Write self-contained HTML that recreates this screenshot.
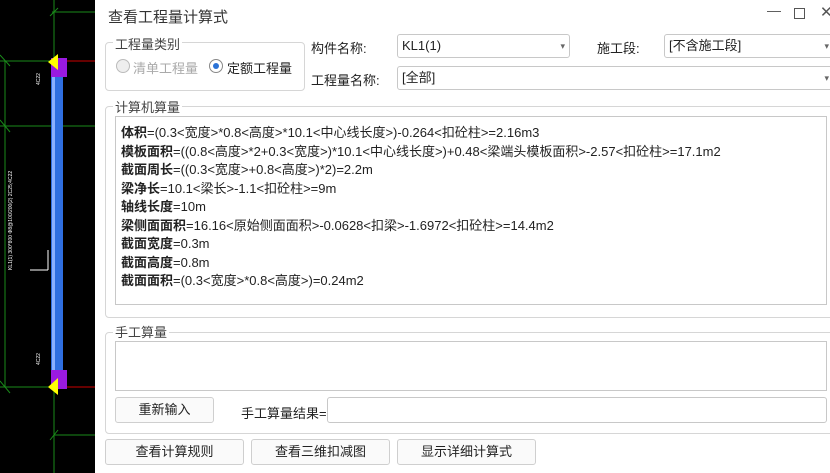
<!DOCTYPE html><html><head><meta charset="utf-8"><style>
body{margin:0;width:830px;height:473px;overflow:hidden;background:#fff;font-family:"Liberation Sans","Microsoft YaHei","Noto Sans CJK SC",sans-serif;font-size:13px;color:#222;position:relative}
.a{position:absolute}
.grp{position:absolute;border:1px solid #d6d6d6;border-radius:4px}
.lg{position:absolute;background:#fff;padding:0 2px;color:#444;font-size:13px}
.sel{position:absolute;border:1px solid #c8c8c8;border-radius:3px;background:#fff;box-sizing:border-box;padding:0 4px;line-height:22px;font-size:13px}
.sel:after{content:"▾";position:absolute;right:4px;top:0;font-size:9px;color:#666}
.btn{position:absolute;border:1px solid #cfcfcf;border-radius:3px;background:#fafafa;box-sizing:border-box;text-align:center;line-height:24px;font-size:13px}
.ta{position:absolute;border:1px solid #c8c8c8;box-sizing:border-box;background:#fff}
.ln{position:absolute;left:5px;font-size:13px;white-space:nowrap}
.ln b{font-weight:bold}
</style></head><body>
<div class="a" style="left:0;top:0;width:95px;height:473px;background:#000;overflow:hidden">
<svg width="95" height="473">
<g stroke="#1a8a1a" stroke-width="1" fill="none">
<line x1="54" y1="0" x2="54" y2="60"/><line x1="5" y1="61" x2="5" y2="387"/>
<line x1="52" y1="12" x2="95" y2="12"/><line x1="0" y1="61" x2="95" y2="61"/>
<line x1="0" y1="126" x2="95" y2="126"/><line x1="0" y1="387" x2="95" y2="387"/>
<line x1="54" y1="387" x2="54" y2="473"/><line x1="54" y1="435" x2="95" y2="435"/>
<line x1="0" y1="55" x2="10" y2="66"/><line x1="0" y1="120" x2="10" y2="132"/><line x1="0" y1="381" x2="10" y2="393"/><line x1="50" y1="16" x2="58" y2="8"/><line x1="50" y1="440" x2="58" y2="430"/>
</g>
<line x1="60" y1="61" x2="95" y2="61" stroke="#c00"/><line x1="60" y1="387" x2="95" y2="387" stroke="#c00"/>
<rect x="51" y="70" width="12" height="305" fill="#2f6fe0"/><rect x="52" y="70" width="3" height="305" fill="#8ab0ff"/>
<rect x="51" y="58" width="16" height="19" fill="#9a1ae0"/><rect x="51" y="370" width="16" height="19" fill="#9a1ae0"/>
<polygon points="48,62 58,54 58,70" fill="#ff0"/><polygon points="48,387 58,378 58,395" fill="#ff0"/>
<line x1="30" y1="270" x2="48" y2="270" stroke="#fff"/><line x1="48" y1="250" x2="48" y2="270" stroke="#fff"/>
<text x="0" y="0" fill="#fff" font-size="5" transform="translate(12,270) rotate(-90)">KL1(1) 300*800 Φ8@100/200(2) 2C25;4C22</text>
<text x="0" y="0" fill="#fff" font-size="5" transform="translate(40,85) rotate(-90)">4C22</text>
<text x="0" y="0" fill="#fff" font-size="5" transform="translate(40,365) rotate(-90)">4C22</text>
</svg></div>
<div class="a" style="left:108px;top:6px;font-size:15px;color:#333">查看工程量计算式</div>
<div class="a" style="left:767px;top:2px;font-size:14px;color:#555">—</div>
<div class="a" style="left:794px;top:8px;width:9px;height:9px;border:1px solid #555"></div>
<div class="a" style="left:820px;top:3px;font-size:15px;color:#555">✕</div>
<div class="grp" style="left:105px;top:42px;width:198px;height:47px"></div>
<div class="lg" style="left:113px;top:34px">工程量类别</div>
<div class="a" style="left:116px;top:59px;width:12px;height:12px;border:1px solid #bbb;border-radius:50%;background:#eee"></div>
<div class="a" style="left:133px;top:58px;color:#aaa">清单工程量</div>
<div class="a" style="left:209px;top:59px;width:12px;height:12px;border:1px solid #888;border-radius:50%"></div>
<div class="a" style="left:213px;top:63px;width:6px;height:6px;border-radius:50%;background:#2a72d6"></div>
<div class="a" style="left:227px;top:58px">定额工程量</div>
<div class="a" style="left:311px;top:38px">构件名称:</div>
<div class="sel" style="left:397px;top:34px;width:173px;height:24px">KL1(1)</div>
<div class="a" style="left:597px;top:38px">施工段:</div>
<div class="sel" style="left:664px;top:34px;width:170px;height:24px">[不含施工段]</div>
<div class="a" style="left:311px;top:70px">工程量名称:</div>
<div class="sel" style="left:397px;top:66px;width:437px;height:24px">[全部]</div>
<div class="grp" style="left:105px;top:106px;width:730px;height:210px"></div>
<div class="lg" style="left:113px;top:97px">计算机算量</div>
<div class="ta" style="left:115px;top:116px;width:712px;height:189px">
<div class="ln" style="top:5px"><b>体积</b>=(0.3&lt;宽度&gt;*0.8&lt;高度&gt;*10.1&lt;中心线长度&gt;)-0.264&lt;扣砼柱&gt;=2.16m3</div>
<div class="ln" style="top:23.5px"><b>模板面积</b>=((0.8&lt;高度&gt;*2+0.3&lt;宽度&gt;)*10.1&lt;中心线长度&gt;)+0.48&lt;梁端头模板面积&gt;-2.57&lt;扣砼柱&gt;=17.1m2</div>
<div class="ln" style="top:42px"><b>截面周长</b>=((0.3&lt;宽度&gt;+0.8&lt;高度&gt;)*2)=2.2m</div>
<div class="ln" style="top:60.5px"><b>梁净长</b>=10.1&lt;梁长&gt;-1.1&lt;扣砼柱&gt;=9m</div>
<div class="ln" style="top:79px"><b>轴线长度</b>=10m</div>
<div class="ln" style="top:97.5px"><b>梁侧面面积</b>=16.16&lt;原始侧面面积&gt;-0.0628&lt;扣梁&gt;-1.6972&lt;扣砼柱&gt;=14.4m2</div>
<div class="ln" style="top:116px"><b>截面宽度</b>=0.3m</div>
<div class="ln" style="top:134.5px"><b>截面高度</b>=0.8m</div>
<div class="ln" style="top:153px"><b>截面面积</b>=(0.3&lt;宽度&gt;*0.8&lt;高度&gt;)=0.24m2</div>
</div>
<div class="grp" style="left:105px;top:332px;width:730px;height:100px"></div>
<div class="lg" style="left:113px;top:322px">手工算量</div>
<div class="ta" style="left:115px;top:341px;width:712px;height:50px"></div>
<div class="btn" style="left:115px;top:397px;width:99px;height:26px">重新输入</div>
<div class="a" style="left:241px;top:403px">手工算量结果=</div>
<div class="ta" style="left:327px;top:397px;width:500px;height:26px;border-radius:3px"></div>
<div class="btn" style="left:105px;top:439px;width:139px;height:26px">查看计算规则</div>
<div class="btn" style="left:251px;top:439px;width:139px;height:26px">查看三维扣减图</div>
<div class="btn" style="left:397px;top:439px;width:139px;height:26px">显示详细计算式</div>
</body></html>
